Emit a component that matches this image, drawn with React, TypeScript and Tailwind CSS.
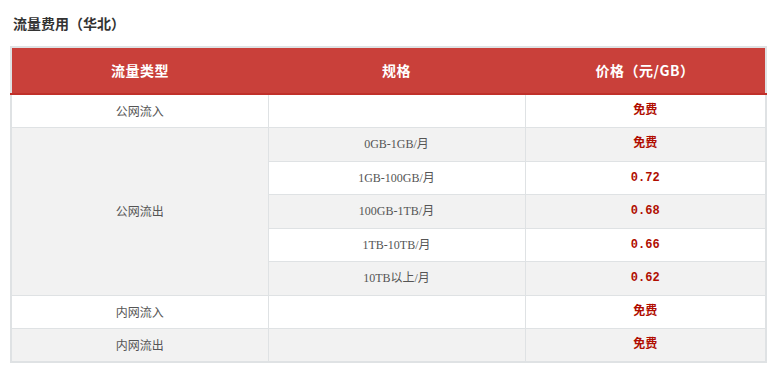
import React from 'react';

type Row = { type?: string; span?: number; spec: string; price: string };

const rows: Row[] = [
  { type: '公网流入', spec: '', price: '免费' },
  { type: '公网流出', span: 5, spec: '0GB-1GB/月', price: '免费' },
  { spec: '1GB-100GB/月', price: '0.72' },
  { spec: '100GB-1TB/月', price: '0.68' },
  { spec: '1TB-10TB/月', price: '0.66' },
  { spec: '10TB以上/月', price: '0.62' },
  { type: '内网流入', spec: '', price: '免费' },
  { type: '内网流出', spec: '', price: '免费' },
];

export default function App() {
  return (
    <div className="w-[776px] h-[371px] bg-white pt-[13px] px-[10px] font-['Liberation_Serif','Noto_Sans_CJK_SC',serif]">
      <h3 className="pl-[3px] text-[14px] font-bold leading-[20px] text-[#333] font-['Noto_Sans_CJK_SC',sans-serif]">
        流量费用（华北）
      </h3>
      <table className="mt-[13px] w-[757px] border-collapse border-2 border-[#dfe2e4] text-center table-fixed">
        <colgroup>
          <col className="w-[257px]" />
          <col className="w-[257px]" />
          <col />
        </colgroup>
        <thead>
          <tr className="h-[47px] bg-[#c9403a] border-b-2 border-[#c0302a] text-white text-[14px] font-bold tracking-[0.5px] font-['Noto_Sans_CJK_SC',sans-serif]">
            <th>流量类型</th>
            <th>规格</th>
            <th>价格（元/GB）</th>
          </tr>
        </thead>
        <tbody className="text-[12px] text-[#555]">
          {rows.map((r, i) => (
            <tr key={i} className={i % 2 === 1 ? 'h-[33.5px] bg-[#f2f2f2]' : 'h-[33.5px] bg-white'}>
              {r.type !== undefined && (
                <td
                  rowSpan={r.span ?? 1}
                  className={
                    r.span
                      ? "border border-[#dfe2e4] bg-[#f2f2f2] font-['Noto_Sans_CJK_SC',sans-serif]"
                      : "border border-[#dfe2e4] font-['Noto_Sans_CJK_SC',sans-serif]"
                  }
                >
                  {r.type}
                </td>
              )}
              <td className="border border-[#dfe2e4]">{r.spec}</td>
              <td className="border border-[#dfe2e4] font-bold text-[12px] text-[#b00d00] font-['Liberation_Mono','Noto_Sans_CJK_SC',monospace]">
                {r.price}
              </td>
            </tr>
          ))}
        </tbody>
      </table>
    </div>
  );
}
